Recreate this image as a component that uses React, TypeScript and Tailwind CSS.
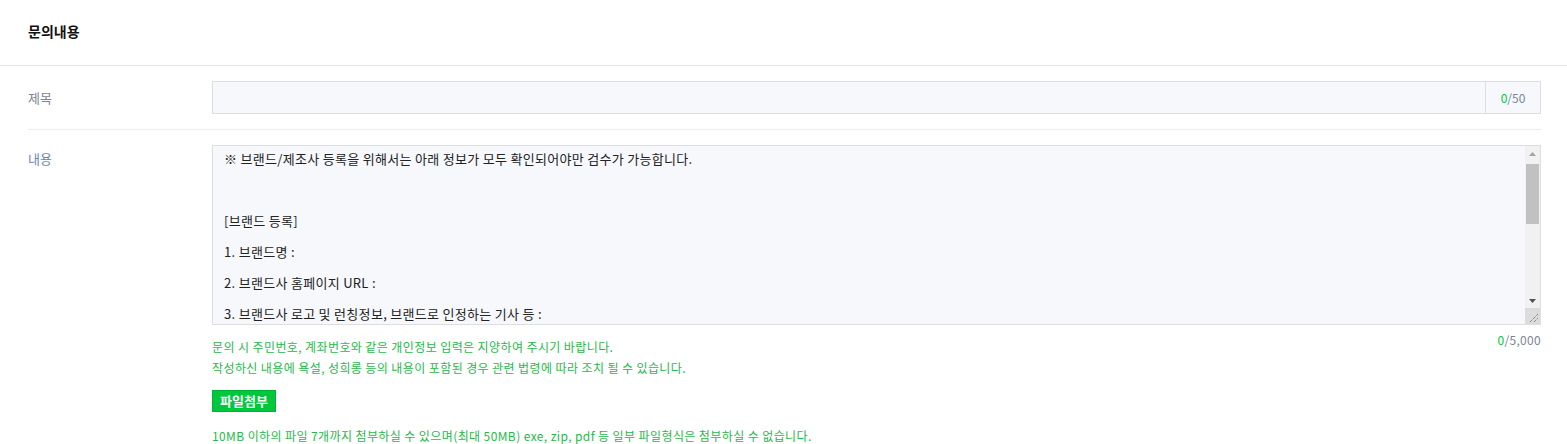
import { useEffect, useRef } from "react";

const body = `※ 브랜드/제조사 등록을 위해서는 아래 정보가 모두 확인되어야만 검수가 가능합니다.

[브랜드 등록]
1. 브랜드명 :
2. 브랜드사 홈페이지 URL :
3. 브랜드사 로고 및 런칭정보, 브랜드로 인정하는 기사 등 :
4. 브랜드 상품 판매 URL :

[제조사 등록]
1. 제조사명 :
2. 제조사 홈페이지 URL :
3. 사업자등록증 사본 :
4. 제조사 상품 판매 URL :
`;

function FakeScrollbar() {
  return (
    <div className="w-[15px] shrink-0 flex flex-col bg-[#f1f1f1]">
      <div className="h-[15px] flex items-center justify-center">
        <svg width="7" height="4" viewBox="0 0 7 4">
          <path d="M0 4 L3.5 0 L7 4 Z" fill="#a3a3a3" />
        </svg>
      </div>
      <div className="flex-1 px-[1px] pt-[3px]">
        <div className="h-[60px] bg-[#c1c1c1]" />
      </div>
      <div className="h-[15px] flex items-center justify-center">
        <svg width="7" height="4" viewBox="0 0 7 4">
          <path d="M0 0 L3.5 4 L7 0 Z" fill="#505050" />
        </svg>
      </div>
      <div className="h-[16px] bg-[#dcdcdc] flex items-end justify-end p-[2px]">
        <svg width="9" height="9" viewBox="0 0 9 9">
          <path d="M1 9 L9 1 M5 9 L9 5" stroke="#555" strokeWidth="1" strokeDasharray="1 1" />
        </svg>
      </div>
    </div>
  );
}

export default function App() {
  const ta = useRef<HTMLTextAreaElement>(null);
  useEffect(() => {
    if (ta.current) ta.current.scrollTop = 3;
  }, []);

  return (
    <div
      className="w-full bg-white text-[#222]"
      style={{ fontFamily: '"Noto Sans CJK KR", "Noto Sans", sans-serif' }}
    >
      {/* header */}
      <div className="h-[66px] flex items-center pb-[3px] px-7 border-b border-[#e5e6ea]">
        <h2 className="text-[14px] font-bold text-[#111]">문의내용</h2>
      </div>

      <div className="pl-7 pr-[26px]">
        {/* 제목 */}
        <div className="flex pt-[15px] pb-[15px] border-b border-[#ebecef]">
          <div className="w-[184px] shrink-0 h-[33px] flex items-center text-[13px] text-[#7d8494]">
            제목
          </div>
          <div className="flex-1 flex h-[33px] border border-[#dcdee3] bg-[#f7f8fc]">
            <input className="flex-1 bg-transparent outline-none px-3 text-[13px]" />
            <div className="w-[55px] border-l border-[#dcdee3] flex items-center justify-center text-[12px] text-[#7d8494]">
              <span className="text-[#00c73c]">0</span>/50
            </div>
          </div>
        </div>

        {/* 내용 */}
        <div className="flex pt-[15px]">
          <div className="w-[184px] shrink-0 pt-[4px] text-[13px] text-[#6a86ad]">내용</div>
          <div className="flex-1 flex flex-col">
            <div className="flex h-[180px] border border-[#dcdee3] bg-[#f7f8fc]">
              <textarea
                ref={ta}
                defaultValue={body}
                className="flex-1 h-full resize-none bg-transparent px-[11px] pt-0 text-[13px] tracking-[0.3px] leading-[31px] text-[#222] outline-none overflow-hidden"
              />
              <FakeScrollbar />
            </div>
            <div className="flex justify-between mt-[11px]">
              <div className="text-[12px] leading-[21px] tracking-[0.4px] text-[#1fb94a]">
                <p>문의 시 주민번호, 계좌번호와 같은 개인정보 입력은 지양하여 주시기 바랍니다.</p>
                <p>작성하신 내용에 욕설, 성희롱 등의 내용이 포함된 경우 관련 법령에 따라 조치 될 수 있습니다.</p>
              </div>
              <div className="text-[12px] leading-[10px] -mt-[1px] tracking-[0.3px] text-[#7d8494]">
                <span className="text-[#00c73c]">0</span>/5,000
              </div>
            </div>
            <div className="mt-[9px]">
              <button className="h-[22px] px-[7px] bg-[#00c73c] border border-[#00b236] text-white text-[13px] font-bold leading-none">
                파일첨부
              </button>
            </div>
            <p className="mt-[15px] text-[12px] leading-[18px] tracking-[0.4px] text-[#1fb94a]">
              10MB 이하의 파일 7개까지 첨부하실 수 있으며(최대 50MB) exe, zip, pdf 등 일부 파일형식은 첨부하실 수 없습니다.
            </p>
          </div>
        </div>
      </div>
    </div>
  );
}
